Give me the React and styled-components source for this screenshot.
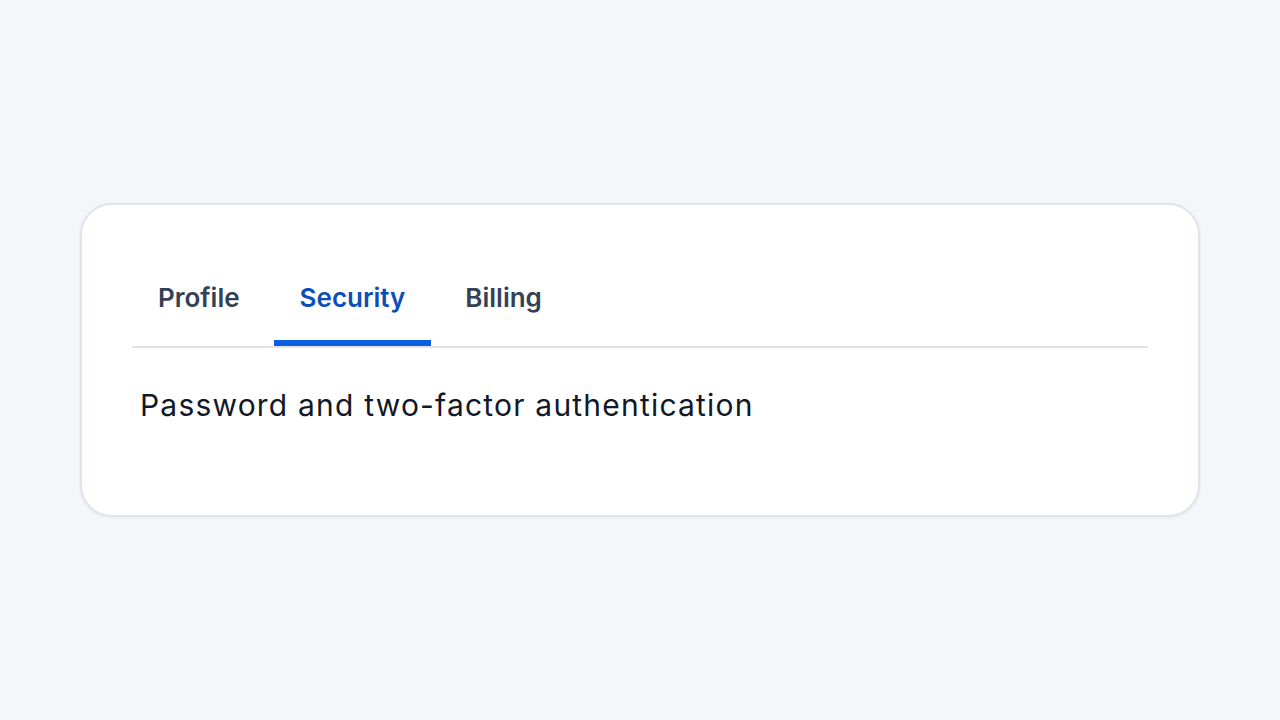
import React, { useState } from "react";
import styled, { createGlobalStyle } from "styled-components";

const GlobalStyle = createGlobalStyle`
  html, body {
    margin: 0;
    padding: 0;
    height: 100%;
  }
  body {
    background: #f4f6fa;
    font-family: Inter, "Noto Sans", sans-serif;
  }
  #root {
    height: 100%;
  }
`;

const Page = styled.div`
  height: 100%;
  display: flex;
  align-items: center;
  justify-content: center;
`;

const Card = styled.div`
  width: 1120px;
  box-sizing: border-box;
  background: #ffffff;
  border: 2px solid #e0e4eb;
  border-radius: 32px;
  box-shadow: 0 1px 3px rgba(17, 24, 39, 0.06);
  padding: 48px 50px 48px;
`;

const TabList = styled.div`
  display: flex;
  gap: 8px;
  border-bottom: 2px solid #dee2e9;
`;

const Tab = styled.button`
  position: relative;
  border: 0;
  background: none;
  cursor: pointer;
  padding: 28px 26px 31px;
  font-family: inherit;
  font-size: 26px;
  line-height: 34px;
  font-weight: 600;
  color: ${(p) => (p.$active ? "#0b4fb8" : "#334155")};

  &::after {
    content: "";
    position: absolute;
    left: 0;
    right: 0;
    bottom: 0;
    height: 6px;
    background: ${(p) => (p.$active ? "#0a5fe0" : "transparent")};
  }
`;

const Panel = styled.div`
  padding: 35px 8px 39px;
  font-size: 30px;
  line-height: 45px;
  letter-spacing: 1.2px;
  color: #111827;
`;

const tabs = [
  { id: "profile", label: "Profile", text: "Name, photo and contact details" },
  { id: "security", label: "Security", text: "Password and two-factor authentication" },
  { id: "billing", label: "Billing", text: "Plan, invoices and payment methods" },
];

export default function App() {
  const [current, setCurrent] = useState("security");
  const tab = tabs.find((t) => t.id === current);

  return (
    <>
      <GlobalStyle />
      <Page>
        <Card>
          <TabList role="tablist">
            {tabs.map((t) => (
              <Tab
                key={t.id}
                role="tab"
                $active={t.id === current}
                onClick={() => setCurrent(t.id)}
              >
                {t.label}
              </Tab>
            ))}
          </TabList>
          <Panel role="tabpanel">{tab.text}</Panel>
        </Card>
      </Page>
    </>
  );
}
